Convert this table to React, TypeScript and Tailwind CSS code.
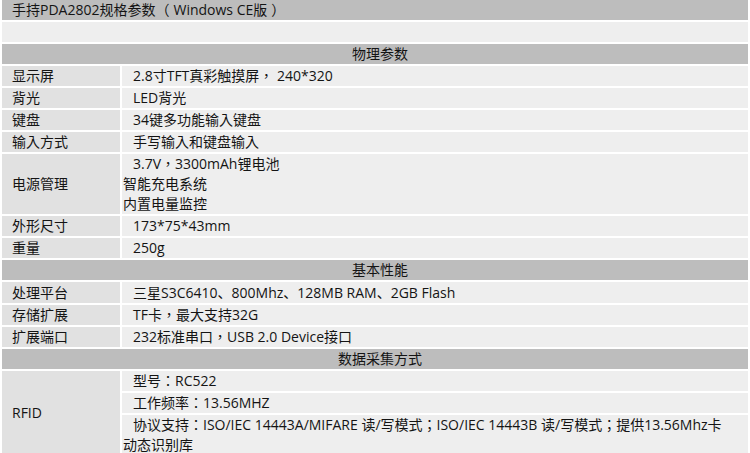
const font = { fontFamily: '"Open Sans", "Noto Sans CJK TC", "Noto Sans CJK SC", sans-serif' };
const sc = { fontFamily: '"Noto Sans CJK SC", sans-serif' };

type Row = { label: string; lines: React.ReactNode[] };

const Dun = () => <span style={sc}>、</span>;

const physical: Row[] = [
  { label: '显示屏', lines: ['2.8寸TFT真彩触摸屏， 240*320'] },
  { label: '背光', lines: ['LED背光'] },
  { label: '键盘', lines: ['34键多功能输入键盘'] },
  { label: '输入方式', lines: ['手写输入和键盘输入'] },
  { label: '电源管理', lines: ['3.7V，3300mAh锂电池', '智能充电系统', '内置电量监控'] },
  { label: '外形尺寸', lines: ['173*75*43mm'] },
  { label: '重量', lines: ['250g'] },
];

const performance: Row[] = [
  {
    label: '处理平台',
    lines: [
      <>
        三星S3C6410<Dun />800Mhz<Dun />128MB RAM<Dun />2GB Flash
      </>,
    ],
  },
  { label: '存储扩展', lines: ['TF卡，最大支持32G'] },
  { label: '扩展端口', lines: ['232标准串口，USB 2.0 Device接口'] },
];

function Section({ title }: { title: string }) {
  return (
    <tr>
      <td colSpan={2} className="h-[20px] bg-[#bdbdbd] p-0 pl-[10px] text-center leading-[20px]">
        {title}
      </td>
    </tr>
  );
}

function SpecRow({ row }: { row: Row }) {
  return (
    <tr>
      <td className="h-[20px] bg-[#e1e1e1] p-0 pl-[10px] align-middle leading-[20px]">{row.label}</td>
      <td className="bg-[#eeeeee] p-0 pl-px align-middle leading-[20px]">
        {row.lines.map((l, i) => (
          <div key={i} className={i === 0 ? 'indent-[10px]' : ''}>
            {l}
          </div>
        ))}
      </td>
    </tr>
  );
}

export default function App() {
  return (
    <div className="h-[453px] w-[750px] overflow-hidden bg-white text-[14px] text-[#141414]" style={font}>
      <table className="-mt-[2px] w-[750px] table-fixed border-separate border-spacing-[2px]">
        <colgroup>
          <col className="w-[118px]" />
          <col />
        </colgroup>
        <tbody>
          <tr>
            <td colSpan={2} className="h-[20px] bg-[#bdbdbd] p-0 pl-[10px] leading-[20px]">
              手持PDA2802规格参数<span className="mr-[4px]">（</span>Windows CE版<span className="ml-[4px]">）</span>
            </td>
          </tr>
          <tr>
            <td colSpan={2} className="h-[20px] bg-[#eeeeee] p-0"></td>
          </tr>
          <Section title="物理参数" />
          {physical.map((r) => (
            <SpecRow key={r.label} row={r} />
          ))}
          <Section title="基本性能" />
          {performance.map((r) => (
            <SpecRow key={r.label} row={r} />
          ))}
          <Section title="数据采集方式" />
          <tr>
            <td rowSpan={3} className="bg-[#e1e1e1] p-0 pl-[10px] align-middle leading-[20px]">
              RFID
            </td>
            <td className="h-[20px] bg-[#eeeeee] p-0 pl-px indent-[10px] leading-[20px]">型号：RC522</td>
          </tr>
          <tr>
            <td className="h-[20px] bg-[#eeeeee] p-0 pl-px indent-[10px] leading-[20px]">工作频率：13.56MHZ</td>
          </tr>
          <tr>
            <td className="bg-[#eeeeee] p-0 pl-px leading-[20px]">
              <div className="indent-[10px]">
                协议支持：ISO/IEC 14443A/MIFARE 读/写模式；ISO/IEC 14443B 读/写模式；提供13.56Mhz卡
              </div>
              <div>动态识别库</div>
            </td>
          </tr>
        </tbody>
      </table>
    </div>
  );
}
